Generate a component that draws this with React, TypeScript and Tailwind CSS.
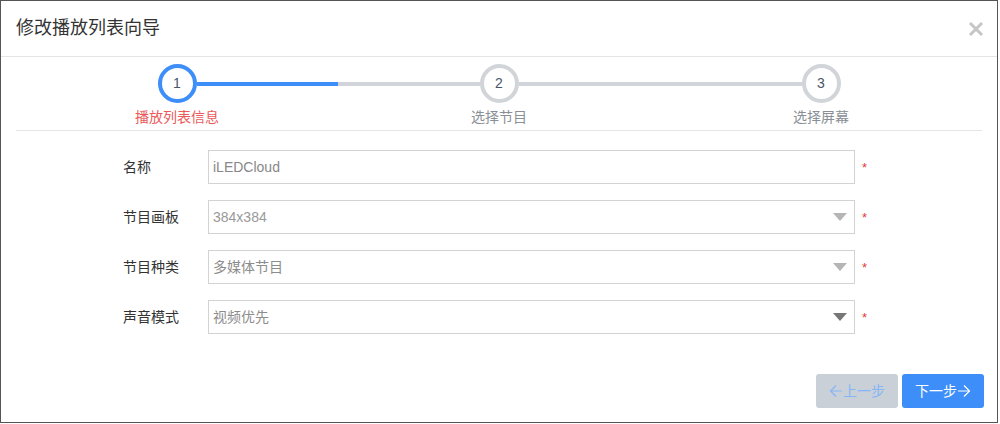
import React from 'react';

const font = { fontFamily: '"Liberation Sans", "Noto Sans CJK SC", sans-serif' };

const steps = [
  { n: 1, label: '播放列表信息', active: true, left: 'bg-transparent', right: 'bg-[#3d8ef8]' },
  { n: 2, label: '选择节目', active: false, left: 'bg-[#d1d4d9]', right: 'bg-[#d1d4d9]' },
  { n: 3, label: '选择屏幕', active: false, left: 'bg-[#d1d4d9]', right: 'bg-transparent' },
];

const Caret: React.FC<{ dark?: boolean }> = ({ dark }) => (
  <svg width="14" height="8" viewBox="0 0 14 8" className="shrink-0">
    <polygon points="0,0 14,0 7,8" fill={dark ? '#777' : '#b5b5b5'} />
  </svg>
);

const Arrow: React.FC<{ dir: 'left' | 'right'; color: string }> = ({ dir, color }) => (
  <svg width="14" height="14" viewBox="0 0 14 14" className="shrink-0">
    {dir === 'left' ? (
      <path d="M13 7 H1.5 M7 1.5 L1.5 7 L7 12.5" stroke={color} strokeWidth="1.2" fill="none" />
    ) : (
      <path d="M1 7 H12.5 M7 1.5 L12.5 7 L7 12.5" stroke={color} strokeWidth="1.2" fill="none" />
    )}
  </svg>
);

const Row: React.FC<{ label: string; children: React.ReactNode }> = ({ label, children }) => (
  <div className="flex items-center h-[34px]">
    <div className="w-[85px] text-[14px] text-[#333]">{label}</div>
    <div className="w-[647px] h-[34px] border border-[#d3d3d3] flex items-center justify-between pl-[4px] pr-[7px]">
      {children}
    </div>
    <span className="ml-[7px] text-[13px] text-[#e53935] leading-none">*</span>
  </div>
);

export default function App() {
  return (
    <div className="w-[1000px] h-[424px] bg-white" style={font}>
      <div className="w-[998px] h-[423px] border border-[#555] flex flex-col">
        <div className="h-[56px] shrink-0 flex items-center justify-between pl-[15px] pr-[13px] border-b border-[#e5e5e5]">
          <span className="text-[18px] text-[#333]">修改播放列表向导</span>
          <svg width="16" height="16" viewBox="0 0 16 16">
            <path d="M2 2 L14 14 M14 2 L2 14" stroke="#c6c6c6" strokeWidth="3" />
          </svg>
        </div>

        <div className="mx-[15px] grid grid-cols-3 border-b border-[#e5e5e5] pt-[7px] pb-[4px]">
          {steps.map((s) => (
            <div key={s.n} className="flex flex-col items-center">
              <div className="flex items-center w-full">
                <div className={`flex-1 h-[4px] ${s.left}`} />
                <div
                  className={`w-[39px] h-[39px] rounded-full border-4 bg-white flex items-center justify-center text-[14px] text-[#4a5568] ${
                    s.active ? 'border-[#3d8ef8]' : 'border-[#d1d4d9]'
                  }`}
                >
                  {s.n}
                </div>
                <div className={`flex-1 h-[4px] ${s.right}`} />
              </div>
              <div className={`mt-[5px] text-[14px] leading-[18px] ${s.active ? 'text-[#ea5a5a]' : 'text-[#8a8f96]'}`}>
                {s.label}
              </div>
            </div>
          ))}
        </div>

        <div className="pl-[122px] pt-[19px] flex flex-col gap-[16px]">
          <Row label="名称">
            <span className="text-[14px] text-[#888]">iLEDCloud</span>
          </Row>
          <Row label="节目画板">
            <span className="text-[14px] text-[#999]">384x384</span>
            <Caret />
          </Row>
          <Row label="节目种类">
            <span className="text-[14px] text-[#8c8c8c]">多媒体节目</span>
            <Caret />
          </Row>
          <Row label="声音模式">
            <span className="text-[14px] text-[#8c8c8c]">视频优先</span>
            <Caret dark />
          </Row>
        </div>

        <div className="mt-auto flex justify-end gap-[4px] pr-[13px] pb-[14px]">
          <button className="w-[82px] h-[34px] rounded-[3px] bg-[#c9d0d8] text-[14px] text-[#86b6f5] flex items-center justify-center">
            <Arrow dir="left" color="#86b6f5" />
            上一步
          </button>
          <button className="w-[82px] h-[34px] rounded-[3px] bg-[#3d8ef8] text-[14px] text-white flex items-center justify-center">
            下一步
            <Arrow dir="right" color="#ffffff" />
          </button>
        </div>
      </div>
    </div>
  );
}
